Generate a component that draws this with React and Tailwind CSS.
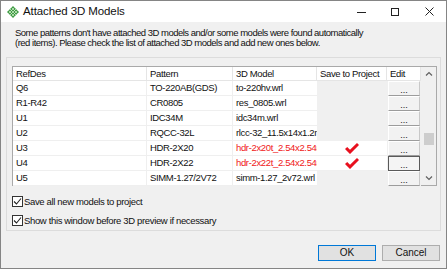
const rows = [
  ["Q6", "TO-220AB(GDS)", "to-220hv.wrl", false],
  ["R1-R42", "CR0805", "res_0805.wrl", false],
  ["U1", "IDC34M", "idc34m.wrl", false],
  ["U2", "RQCC-32L", "rlcc-32_11.5x14x1.2mm.wrl", false],
  ["U3", "HDR-2X20", "hdr-2x20t_2.54x2.54mm.wrl", true],
  ["U4", "HDR-2X22", "hdr-2x22t_2.54x2.54mm.wrl", true],
  ["U5", "SIMM-1.27/2V72", "simm-1.27_2v72.wrl", false],
];

function AppIcon() {
  return (
    <svg width="12" height="12" viewBox="0 0 12 12">
      <polygon points="6,0 12,6 6,12 0,6" fill="#3f9b45" />
      <path d="M3 3 L9 9 M4.5 1.5 L10.5 7.5 M1.5 4.5 L7.5 10.5 M9 3 L3 9 M7.5 1.5 L1.5 7.5 M10.5 4.5 L4.5 10.5" stroke="#d8f0d0" strokeWidth="0.7" />
    </svg>
  );
}

function RedCheck() {
  return (
    <svg width="14" height="11" viewBox="0 0 14 11">
      <polygon points="0,6 2.2,4 5,6.8 12,0 14,2 5,11" fill="#e8101e" />
    </svg>
  );
}

function Checkbox({ label }) {
  return (
    <div className="flex items-center h-[11px]">
      <div className="w-[11px] h-[11px] border border-[#333] bg-white flex items-center justify-center">
        <svg width="9" height="9" viewBox="0 0 9 9">
          <path d="M1 4.5 L3.5 7 L8 1.5" fill="none" stroke="#222" strokeWidth="1.1" />
        </svg>
      </div>
      <span className="ml-[1px] leading-[11px]">{label}</span>
    </div>
  );
}

export default function App() {
  return (
    <div className="w-[447px] h-[269px] border border-[#858585] bg-[#f0f0f0] flex flex-col text-[#111] text-[9.5px] tracking-[-0.35px] font-['Liberation_Sans',Arial,sans-serif] overflow-hidden">
      <div className="h-[21px] bg-white flex items-center shrink-0">
        <div className="ml-[6px] mt-[1px]"><AppIcon /></div>
        <span className="ml-[4px] text-[11.5px] tracking-[-0.1px]">Attached 3D Models</span>
        <div className="ml-auto flex h-full">
          <div className="w-[34px] flex items-center justify-center">
            <div className="w-[9px] h-px bg-[#222] mt-[2px]" />
          </div>
          <div className="w-[34px] flex items-center justify-center">
            <div className="w-[8px] h-[8px] border border-[#222]" />
          </div>
          <div className="w-[34px] flex items-center justify-center">
            <svg width="9" height="9" viewBox="0 0 9 9">
              <path d="M0.5 0.5 L8.5 8.5 M8.5 0.5 L0.5 8.5" stroke="#222" strokeWidth="1" />
            </svg>
          </div>
        </div>
      </div>

      <div className="px-[14px] pt-[6px] leading-[10px] tracking-[-0.5px]">
        <p>Some patterns don't have attached 3D models and/or some models were found automatically</p>
        <p>(red items). Please check the list of attached 3D models and add new ones below.</p>
      </div>

      <div className="mx-[5px] mt-[9px] border border-[#dcdcdc] pl-[5px] pr-[3px] pt-[8px] pb-[4px]">
        <div className="flex border border-[#a9a9a9] bg-white h-[120px]">
          <div className="flex-1">
            <div className="grid grid-cols-[134px_86px_84px_70px_34px] h-[14px] border-b border-[#e5e5e5] leading-[13px]">
              {["RefDes", "Pattern", "3D Model", "Save to Project", "Edit"].map(h => (
                <div key={h} className="pl-[3px] border-r border-[#e5e5e5] whitespace-nowrap overflow-hidden">{h}</div>
              ))}
            </div>
            {rows.map(([ref, pat, model, red], i) => (
              <div key={ref} className="grid grid-cols-[134px_86px_84px_70px_34px] h-[15px] leading-[14px]">
                <div className="pl-[3px] border-r border-b border-[#efefef]">{ref}</div>
                <div className="pl-[3px] border-r border-b border-[#efefef]">{pat}</div>
                <div className={"pl-[3px] border-b border-[#efefef] whitespace-nowrap overflow-hidden " + (red ? "text-[#f01818]" : "")}>{model}</div>
                <div className={"flex items-center justify-center border-b " + (red ? "bg-white border-[#efefef]" : "bg-[#f0f0f0] border-[#f0f0f0]")}>
                  {red && <RedCheck />}
                </div>
                <div className="bg-[#f0f0f0] pl-[1px]">
                  <div className={"w-[32px] h-[15px] flex items-end justify-center pb-[1px] leading-[8px] text-[9px] tracking-normal " + (i === 5 ? "border border-[#5a5a5a] bg-[#f4f4f4]" : "border-t border-l border-white border-b border-b-[#9c9c9c] border-r border-r-[#c8c8c8] bg-[#f2f2f2]")}>...</div>
                </div>
              </div>
            ))}
          </div>
          <div className="w-[16px] bg-[#f0f0f0] flex flex-col items-center">
            <svg width="8" height="6" viewBox="0 0 8 6" className="mt-[4px]">
              <path d="M1 4.5 L4 1.5 L7 4.5" fill="none" stroke="#606060" strokeWidth="1.2" />
            </svg>
            <div className="mt-[56px] w-[10px] h-[12px] bg-[#cdcdcd]" />
            <svg width="8" height="6" viewBox="0 0 8 6" className="mt-auto mb-[4px]">
              <path d="M1 1.5 L4 4.5 L7 1.5" fill="none" stroke="#606060" strokeWidth="1.2" />
            </svg>
          </div>
        </div>
        <div className="mt-[10px] flex flex-col gap-[8px]">
          <Checkbox label="Save all new models to project" />
          <Checkbox label="Show this window before 3D preview if necessary" />
        </div>
      </div>

      <div className="flex justify-end gap-[6px] mt-[14px] mr-[6px] tracking-normal text-[10px]">
        <button className="w-[58px] h-[16px] border border-[#0078d7] bg-[#e1e1e1] leading-[14px]">OK</button>
        <button className="w-[58px] h-[16px] border border-[#adadad] bg-[#e1e1e1] leading-[14px]">Cancel</button>
      </div>
    </div>
  );
}
